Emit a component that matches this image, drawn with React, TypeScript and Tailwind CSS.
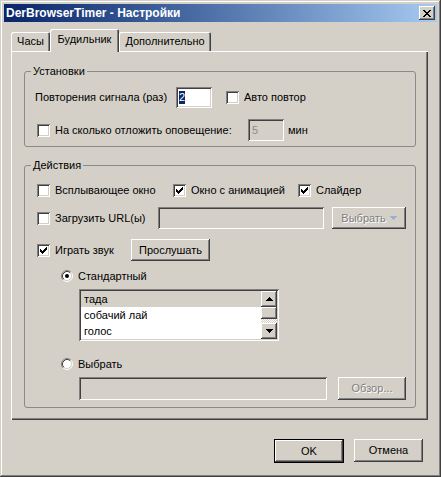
import React from "react";

// classic win9x bevels
const raised =
  "shadow-[inset_-1px_-1px_#404040,inset_1px_1px_#ffffff,inset_-2px_-2px_#808080,inset_2px_2px_#d4d0c8]";
const sunken =
  "shadow-[inset_1px_1px_#808080,inset_-1px_-1px_#ffffff,inset_2px_2px_#404040,inset_-2px_-2px_#d4d0c8]";
const disabledText = "text-[#808080] [text-shadow:1px_1px_0_#ffffff]";

function CheckMark() {
  return (
    <svg width="7" height="7" viewBox="0 0 7 7" shapeRendering="crispEdges">
      <path
        fill="#000"
        d="M6 0h1v1h-1z M5 1h2v1h-2z M0 2h1v1h-1z M4 2h3v1h-3z M0 3h2v1h-2z M3 3h3v1h-3z M0 4h5v1h-5z M1 5h3v1h-3z M2 6h1v1h-1z"
      />
    </svg>
  );
}

function Checkbox({ checked }: { checked?: boolean }) {
  return (
    <span className={`w-[13px] h-[13px] shrink-0 bg-white flex items-center justify-center ${sunken}`}>
      {checked && <CheckMark />}
    </span>
  );
}

function Radio({ checked }: { checked?: boolean }) {
  return (
    <svg width="12" height="12" viewBox="0 0 12 12" className="shrink-0">
      <circle cx="6" cy="6" r="4.5" fill="#fff" />
      <path d="M2.11 9.89 A5.5 5.5 0 0 1 9.89 2.11" stroke="#808080" fill="none" />
      <path d="M9.89 2.11 A5.5 5.5 0 0 1 2.11 9.89" stroke="#ffffff" fill="none" />
      <path d="M2.82 9.18 A4.5 4.5 0 0 1 9.18 2.82" stroke="#404040" fill="none" />
      <path d="M9.18 2.82 A4.5 4.5 0 0 1 2.82 9.18" stroke="#d4d0c8" fill="none" />
      {checked && <circle cx="6" cy="6" r="2" fill="#000" />}
    </svg>
  );
}

function Arrow({ down }: { down?: boolean }) {
  return (
    <svg width="7" height="4" viewBox="0 0 7 4" shapeRendering="crispEdges" className={down ? "rotate-180" : ""}>
      <path fill="#000" d="M3 0h1v1h-1z M2 1h3v1h-3z M1 2h5v1h-5z M0 3h7v1h-7z" />
    </svg>
  );
}

function GroupBox({ title, className, children }: { title: string; className: string; children: React.ReactNode }) {
  return (
    <div className={`relative w-[392px] shrink-0 rounded-[3px] border border-[#8a8a8a] ${className}`}>
      <span className="absolute left-[6px] -top-[7px] px-[2px] leading-[13px] bg-[#d4d0c8]">{title}</span>
      {children}
    </div>
  );
}

export default function App() {
  const items = ["тада", "собачий лай", "голос"];

  return (
    <div className="w-[441px] h-[477px] bg-[#d4d0c8] p-[4px] flex flex-col text-[11px] leading-[13px] text-black font-['Liberation_Sans',Arial,sans-serif] shadow-[inset_-1px_-1px_#404040,inset_1px_1px_#d4d0c8,inset_-2px_-2px_#808080,inset_2px_2px_#ffffff]">
      {/* Title bar */}
      <div className="h-[18px] shrink-0 flex items-center justify-between pl-[2px] pr-[2px] bg-linear-to-r from-[#0a246a] to-[#a6caf0]">
        <span className="text-white font-bold text-[12px]">DerBrowserTimer - Настройки</span>
        <span className={`w-[16px] h-[14px] bg-[#d4d0c8] flex items-center justify-center ${raised}`}>
          <svg width="8" height="7" viewBox="0 0 8 7" shapeRendering="crispEdges">
            <path
              fill="#000"
              d="M0 0h2v1h-2z M6 0h2v1h-2z M1 1h2v1h-2z M5 1h2v1h-2z M2 2h4v1h-4z M3 3h2v1h-2z M2 4h4v1h-4z M1 5h2v1h-2z M5 5h2v1h-2z M0 6h2v1h-2z M6 6h2v1h-2z"
            />
          </svg>
        </span>
      </div>

      <div className="flex flex-col px-[7px] pt-[7px]">
        {/* Tabs */}
        <div className="flex items-end h-[22px]">
          <div className="w-[39px] h-[19px] flex items-center justify-center rounded-t-[2px] shadow-[inset_1px_1px_#ffffff,inset_-1px_0_#404040,inset_-2px_0_#808080]">
            Часы
          </div>
          <div className="relative z-10 w-[69px] h-[23px] -mb-px flex items-center justify-center pb-[2px] bg-[#d4d0c8] rounded-t-[2px] shadow-[inset_1px_1px_#ffffff,inset_-1px_0_#404040,inset_-2px_0_#808080]">
            Будильник
          </div>
          <div className="w-[92px] h-[19px] flex items-center justify-center rounded-t-[2px] shadow-[inset_1px_1px_#ffffff,inset_-1px_0_#404040,inset_-2px_0_#808080]">
            Дополнительно
          </div>
        </div>

        {/* Tab panel */}
        <div className="w-[417px] h-[369px] flex flex-col pt-[20px] pl-[13px] shadow-[inset_1px_1px_#ffffff,inset_-1px_-1px_#404040,inset_-2px_-2px_#808080]">
          <GroupBox title="Установки" className="h-[76px]">
            <div className="mt-[15px] h-[21px] flex items-center pl-[10px]">
              <span className="w-[141px]">Повторения сигнала (раз)</span>
              <span className={`w-[36px] h-[21px] bg-white flex items-center pl-[3px] ${sunken}`}>
                <span className="bg-[#0a246a] text-white">2</span>
              </span>
              <span className="ml-[14px]">
                <Checkbox />
              </span>
              <span className="ml-[5px]">Авто повтор</span>
            </div>
            <div className="mt-[11px] h-[22px] flex items-center pl-[12px]">
              <Checkbox />
              <span className="ml-[5px] w-[193px]">На сколько отложить оповещение:</span>
              <span className={`w-[36px] h-[22px] flex items-center pl-[4px] text-[#8c8c8c] ${sunken}`}>5</span>
              <span className="ml-[4px]">мин</span>
            </div>
          </GroupBox>

          <GroupBox title="Действия" className="mt-[18px] h-[243px]">
            <div className="mt-[14px] h-[20px] flex items-center pl-[12px]">
              <div className="w-[136px] flex items-center gap-[5px]">
                <Checkbox />
                <span>Всплывающее окно</span>
              </div>
              <div className="w-[125px] flex items-center gap-[5px]">
                <Checkbox checked />
                <span>Окно с анимацией</span>
              </div>
              <div className="flex items-center gap-[5px]">
                <Checkbox checked />
                <span>Слайдер</span>
              </div>
            </div>

            <div className="mt-[7px] h-[22px] flex items-center pl-[12px]">
              <Checkbox />
              <span className="ml-[5px] w-[103px]">Загрузить URL(ы)</span>
              <span className={`w-[166px] h-[22px] ${sunken}`} />
              <span className={`ml-[8px] w-[74px] h-[22px] flex items-center justify-center gap-[4px] ${raised}`}>
                <span className={disabledText}>Выбрать</span>
                <svg width="7" height="4" viewBox="0 0 7 4" shapeRendering="crispEdges">
                  <path fill="#9bb0cf" d="M0 0h7v1h-7z M1 1h5v1h-5z M2 2h3v1h-3z M3 3h1v1h-1z" />
                </svg>
              </span>
            </div>

            <div className="mt-[10px] h-[22px] flex items-center pl-[12px]">
              <Checkbox checked />
              <span className="ml-[5px] w-[76px]">Играть звук</span>
              <span className={`w-[79px] h-[22px] flex items-center justify-center ${raised}`}>Прослушать</span>
            </div>

            <div className="mt-[8px] h-[14px] flex items-center pl-[36px]">
              <Radio checked />
              <span className="ml-[5px]">Стандартный</span>
            </div>

            <div className={`ml-[54px] mt-[6px] w-[200px] h-[52px] p-[2px] bg-white flex ${sunken}`}>
              <div className="flex-1 flex flex-col">
                {items.map((it, i) => (
                  <div key={it} className={`h-[16px] flex items-center pl-[3px] ${i === 0 ? "bg-[#d4d0c8]" : ""}`}>
                    {it}
                  </div>
                ))}
              </div>
              <div className="w-[16px] flex flex-col">
                <div className={`h-[16px] bg-[#d4d0c8] flex items-center justify-center ${raised}`}>
                  <Arrow />
                </div>
                <div className={`h-[12px] bg-[#d4d0c8] ${raised}`} />
                <div className="h-[4px] bg-[conic-gradient(#ffffff_25%,#d4d0c8_0_50%,#ffffff_0_75%,#d4d0c8_0)] bg-[length:2px_2px]" />
                <div className={`h-[16px] bg-[#d4d0c8] flex items-center justify-center ${raised}`}>
                  <Arrow down />
                </div>
              </div>
            </div>

            <div className="mt-[16px] h-[14px] flex items-center pl-[36px]">
              <Radio />
              <span className="ml-[5px]">Выбрать</span>
            </div>

            <div className="mt-[6px] h-[23px] flex items-center pl-[54px]">
              <span className={`w-[248px] h-[23px] ${sunken}`} />
              <span className={`ml-[11px] w-[68px] h-[23px] flex items-center justify-center ${raised}`}>
                <span className={disabledText}>Обзор...</span>
              </span>
            </div>
          </GroupBox>
        </div>

        {/* Dialog buttons */}
        <div className="mt-[19px] flex justify-end gap-[10px] pr-[7px]">
          <div className="w-[70px] h-[24px] border border-black">
            <div className={`w-full h-full flex items-center justify-center ${raised}`}>OK</div>
          </div>
          <div className={`w-[69px] h-[23px] flex items-center justify-center ${raised}`}>Отмена</div>
        </div>
      </div>
    </div>
  );
}
